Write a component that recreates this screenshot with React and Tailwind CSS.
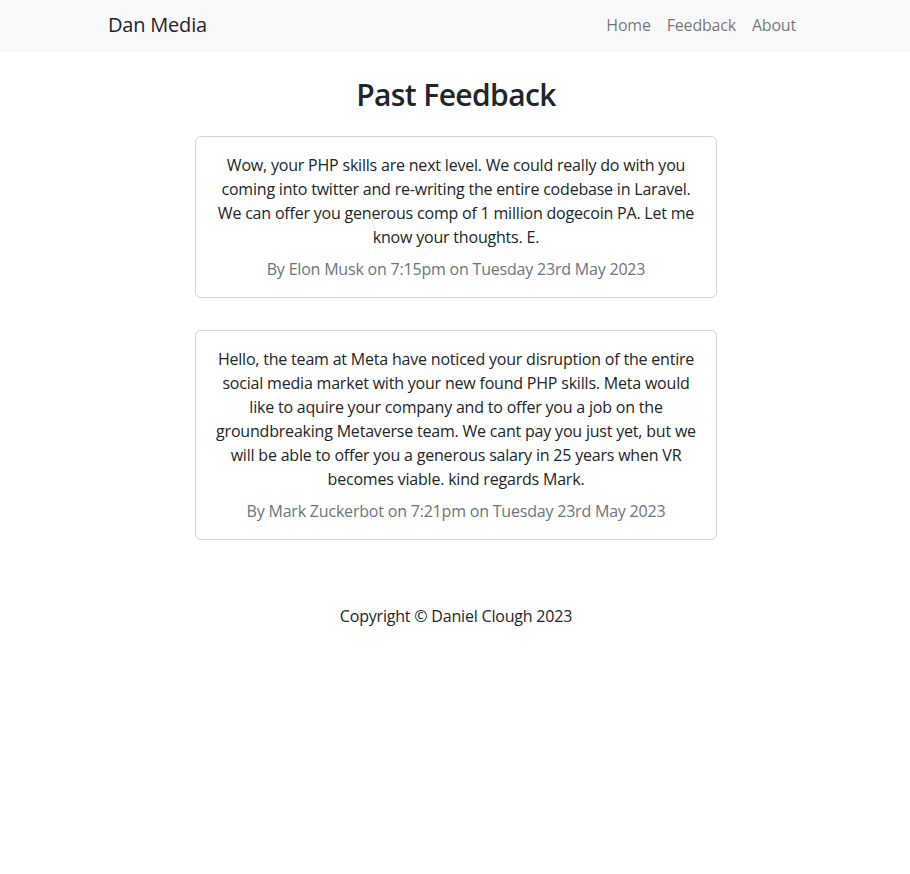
const feedback = [
  {
    lines: [
      'Wow, your PHP skills are next level. We could really do with you',
      'coming into twitter and re-writing the entire codebase in Laravel.',
      'We can offer you generous comp of 1 million dogecoin PA. Let me',
      'know your thoughts. E.',
    ],
    by: 'By Elon Musk on 7:15pm on Tuesday 23rd May 2023',
  },
  {
    lines: [
      'Hello, the team at Meta have noticed your disruption of the entire',
      'social media market with your new found PHP skills. Meta would',
      'like to aquire your company and to offer you a job on the',
      'groundbreaking Metaverse team. We cant pay you just yet, but we',
      'will be able to offer you a generous salary in 25 years when VR',
      'becomes viable. kind regards Mark.',
    ],
    by: 'By Mark Zuckerbot on 7:21pm on Tuesday 23rd May 2023',
  },
];

export default function App() {
  return (
    <div className="min-h-screen bg-white text-[#212529] font-['Open_Sans',sans-serif] text-base leading-6 tracking-[-0.2px]">
      <nav className="bg-[#f8f9fa] h-[52px]">
        <div className="w-[720px] mx-auto pl-[13px] pr-[11px] pb-[2px] h-full flex items-center justify-between">
          <a className="text-xl leading-[30px] text-[#212529]">Dan Media</a>
          <ul className="flex">
            {['Home', 'Feedback', 'About'].map(l => (
              <li key={l}><a className="px-2 py-2 text-[rgba(0,0,0,0.55)]">{l}</a></li>
            ))}
          </ul>
        </div>
      </nav>

      <div className="w-[720px] mx-auto pl-[13px] pr-[11px]">
        <h1 className="text-center text-[30px] leading-[38px] font-semibold tracking-[-0.6px] mt-[24px] mb-[22px]">Past Feedback</h1>

        <div className="flex flex-col items-center gap-[32px]">
          {feedback.map((f, i) => (
            <div key={i} className="w-[522px] border border-[rgba(0,0,0,0.175)] rounded-md p-4 text-center">
              <p className="mb-2">
                {f.lines.map((l, j) => <span key={j} className="block whitespace-nowrap">{l}</span>)}
              </p>
              <p className="text-[#6c757d]">{f.by}</p>
            </div>
          ))}
        </div>

        <footer className="text-center mt-16">Copyright © Daniel Clough 2023</footer>
      </div>
    </div>
  );
}
